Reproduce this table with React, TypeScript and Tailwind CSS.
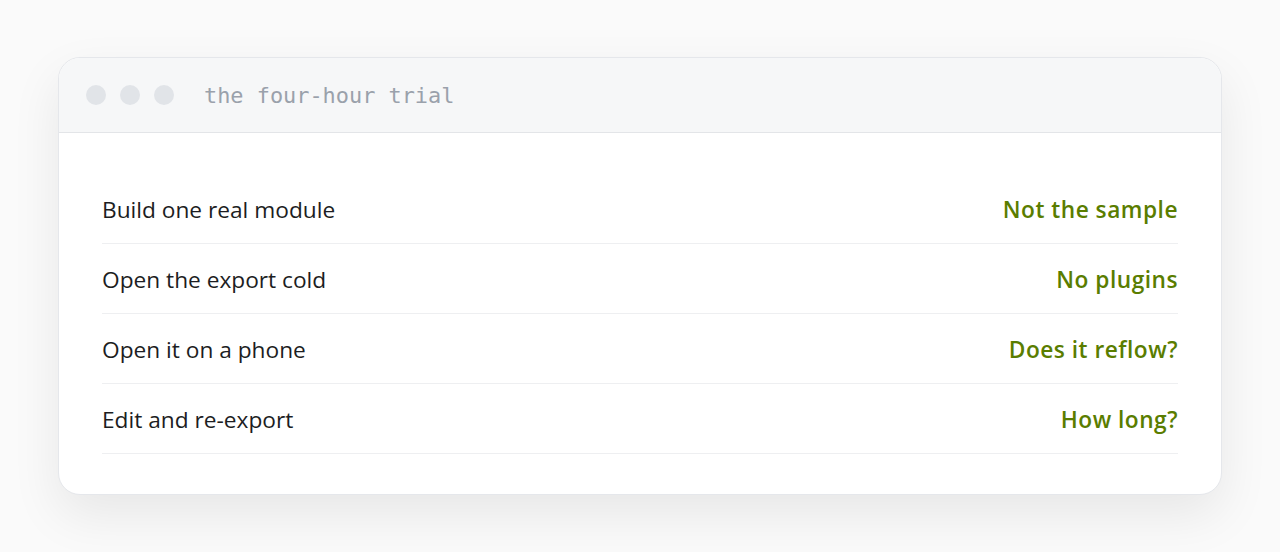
import React from "react";

const rows = [
  { task: "Build one real module", check: "Not the sample" },
  { task: "Open the export cold", check: "No plugins" },
  { task: "Open it on a phone", check: "Does it reflow?" },
  { task: "Edit and re-export", check: "How long?" },
];

export default function App() {
  return (
    <div className="min-h-[552px] bg-[#fafafa] px-[58px] pt-[57px] pb-[57px] font-['Open_Sans','Noto_Sans',sans-serif]">
      <div className="rounded-[22px] border border-[#e5e7eb] bg-white shadow-[0_20px_50px_rgba(0,0,0,0.08)] overflow-hidden">
        <div className="flex items-center h-[75px] px-[27px] bg-[#f6f7f8] border-b border-[#e3e5e8]">
          <div className="flex gap-[14px]">
            <span className="w-5 h-5 rounded-full bg-[#e1e4e8]" />
            <span className="w-5 h-5 rounded-full bg-[#e1e4e8]" />
            <span className="w-5 h-5 rounded-full bg-[#e1e4e8]" />
          </div>
          <span className="ml-[30px] mt-[3px] font-['DejaVu_Sans_Mono',monospace] text-[21.9px] text-[#9aa1ab]">
            the four-hour trial
          </span>
        </div>
        <div className="px-[43px] pt-[41px] pb-[40px]">
          {rows.map((r) => (
            <div
              key={r.task}
              className="flex items-center justify-between h-[70px] pt-[3px] border-b border-[#eeeff1] text-[22.7px]"
            >
              <span className="text-[#1c1d22]">{r.task}</span>
              <span className="font-semibold tracking-[0.5px] text-[#5a7d00]">{r.check}</span>
            </div>
          ))}
        </div>
      </div>
    </div>
  );
}
